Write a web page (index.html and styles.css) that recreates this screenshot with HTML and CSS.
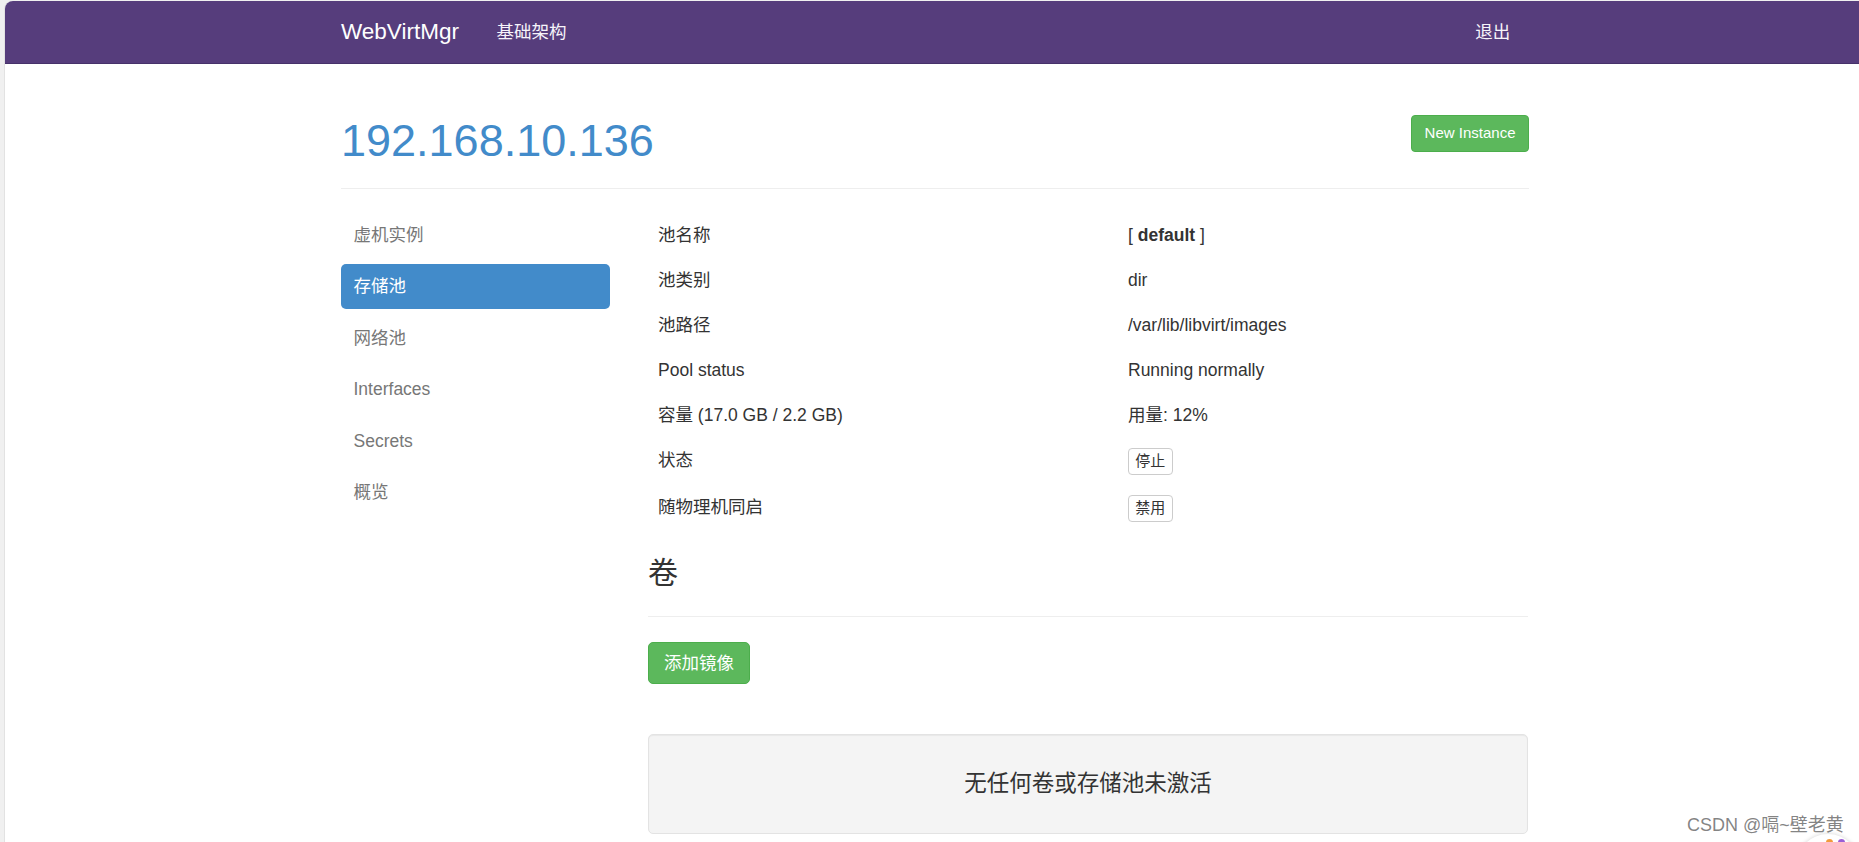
FILE: index.html
```html
<!DOCTYPE html>
<html lang="zh-CN">
<head>
<meta charset="utf-8">
<title>WebVirtMgr</title>
<link rel="stylesheet" href="styles.css">
</head>
<body>
<div class="frame">
  <nav class="navbar">
    <div class="nav-inner">
      <a class="brand">WebVirtMgr</a>
      <a class="nav-link">基础架构</a>
      <a class="nav-link nav-right">退出</a>
    </div>
  </nav>
  <div class="container">
    <div class="page-header">
      <h1>192.168.10.136</h1>
      <a class="btn btn-success btn-sm">New Instance</a>
    </div>
    <div class="layout">
      <ul class="side-nav">
        <li><a>虚机实例</a></li>
        <li class="active"><a>存储池</a></li>
        <li><a>网络池</a></li>
        <li><a>Interfaces</a></li>
        <li><a>Secrets</a></li>
        <li><a>概览</a></li>
      </ul>
      <div class="main">
        <table class="info">
          <tr><td class="label">池名称</td><td>[ <strong>default</strong> ]</td></tr>
          <tr><td class="label">池类别</td><td>dir</td></tr>
          <tr><td class="label">池路径</td><td>/var/lib/libvirt/images</td></tr>
          <tr><td class="label">Pool status</td><td>Running normally</td></tr>
          <tr><td class="label">容量 (17.0 GB / 2.2 GB)</td><td>用量: 12%</td></tr>
          <tr><td class="label">状态</td><td><span class="btn btn-default btn-xs">停止</span></td></tr>
          <tr><td class="label">随物理机同启</td><td><span class="btn btn-default btn-xs">禁用</span></td></tr>
        </table>
        <h3 class="section-title">卷</h3>
        <div class="actions"><span class="btn btn-success">添加镜像</span></div>
        <div class="well"><h4>无任何卷或存储池未激活</h4></div>
      </div>
    </div>
  </div>
</div>
<div class="watermark">CSDN @嗝~壁老黄</div>
<div class="corner"><div class="float-badge"><span class="dot dot-a"></span><span class="dot dot-b"></span></div></div>
</body>
</html>
```

FILE: styles.css
```css
* { box-sizing: border-box; }

html, body {
  margin: 0;
  padding: 0;
  height: 842px;
  overflow: hidden;
}

body {
  background: #f0f0f0;
  font-family: "Liberation Sans", "Noto Sans CJK SC", sans-serif;
  font-size: 17.5px;
  line-height: 25px;
  color: #333;
  position: relative;
}

.frame {
  margin: 1px 0 0 5px;
  height: 841px;
  background: #fff;
  border-top-left-radius: 8px;
  overflow: hidden;
  box-shadow: -1px 0 0 #e2e2e2;
}

/* navbar */
.navbar {
  height: 63px;
  background: #563d7c;
  border-bottom: 1px solid #46316a;
}

.nav-inner {
  width: 1188px;
  margin-left: 336px;
  height: 62px;
  display: flex;
  align-items: center;
}

.brand {
  font-size: 22.5px;
  line-height: 30px;
  color: #fff;
  padding-right: 18.75px;
}

.nav-link {
  font-size: 17.5px;
  line-height: 25px;
  color: #f6f4fa;
  padding: 0 18.75px;
}

.nav-right { margin-left: auto; }

/* container */
.container {
  width: 1188px;
  margin-left: 336px;
}

.page-header {
  margin-top: 52px;
  padding-bottom: 22px;
  border-bottom: 1px solid #eee;
  display: flex;
  justify-content: space-between;
  align-items: flex-start;
}

.page-header h1 {
  margin: 0;
  font-size: 45px;
  line-height: 50px;
  font-weight: normal;
  color: #428bca;
}

.btn {
  display: inline-block;
  border: 1px solid transparent;
  white-space: nowrap;
  cursor: pointer;
}

.btn-success {
  background: #5cb85c;
  border-color: #4cae4c;
  color: #fff;
  font-size: 17.5px;
  line-height: 25px;
  padding: 7.5px 15px;
  border-radius: 5px;
}

.btn-sm {
  margin-top: -1px;
  font-size: 15px;
  line-height: 22.5px;
  padding: 6.25px 12.5px;
  border-radius: 4px;
}

.btn-default {
  background: #fff;
  border-color: #ccc;
  color: #333;
}

.btn-xs {
  font-size: 15px;
  line-height: 22.5px;
  padding: 1.25px 6.25px;
  border-radius: 4px;
  vertical-align: top;
}

/* layout */
.layout {
  margin-top: 24px;
  display: grid;
  grid-template-columns: 269px 880px;
  column-gap: 38px;
  align-items: start;
}

.side-nav {
  list-style: none;
  margin: 0;
  padding: 0;
}

.side-nav li + li { margin-top: 6.4px; }

.side-nav a {
  display: block;
  height: 45px;
  padding: 10px 12.5px;
  line-height: 25px;
  color: #777;
  border-radius: 5px;
}

.side-nav .active a {
  background: #428bca;
  color: #fff;
}

/* table */
.info {
  width: 100%;
  border-collapse: collapse;
}

.info td {
  padding: 10px;
  line-height: 25px;
  vertical-align: top;
}

.info td.label { width: 470px; }

.info strong { font-weight: bold; }

.section-title {
  margin: 24px 0 0;
  font-size: 30px;
  line-height: 33px;
  font-weight: normal;
  padding-bottom: 27px;
  border-bottom: 1px solid #eee;
}

.actions {
  margin-top: 25px;
  height: 42px;
}

.well {
  margin-top: 50px;
  padding: 24px;
  background: #f4f4f4;
  border: 1px solid #e3e3e3;
  border-radius: 5px;
  box-shadow: inset 0 1px 1px rgba(0, 0, 0, 0.05);
}

.well h4 {
  margin: 12.5px 0;
  font-size: 22.5px;
  line-height: 24.75px;
  font-weight: normal;
  text-align: center;
}

/* overlays */
.watermark {
  position: absolute;
  left: 1687px;
  top: 814px;
  font-size: 18px;
  line-height: 22px;
  color: rgba(110, 110, 110, 0.85);
  white-space: nowrap;
}

.corner {
  position: absolute;
  left: 1790px;
  top: 830px;
  width: 69px;
  height: 12px;
  overflow: hidden;
}

.float-badge {
  position: relative;
  margin: 4px 0 0 6px;
  width: 64px;
  height: 64px;
  border-radius: 50%;
  background: #fff;
  box-shadow: 0 0 4px rgba(0, 0, 0, 0.18);
}

.dot {
  position: absolute;
  top: 5px;
  width: 7px;
  height: 7px;
  border-radius: 50%;
}

.dot-a { left: 30px; background: #f29b3c; }
.dot-b { left: 42px; background: #9b5fd6; }
```
